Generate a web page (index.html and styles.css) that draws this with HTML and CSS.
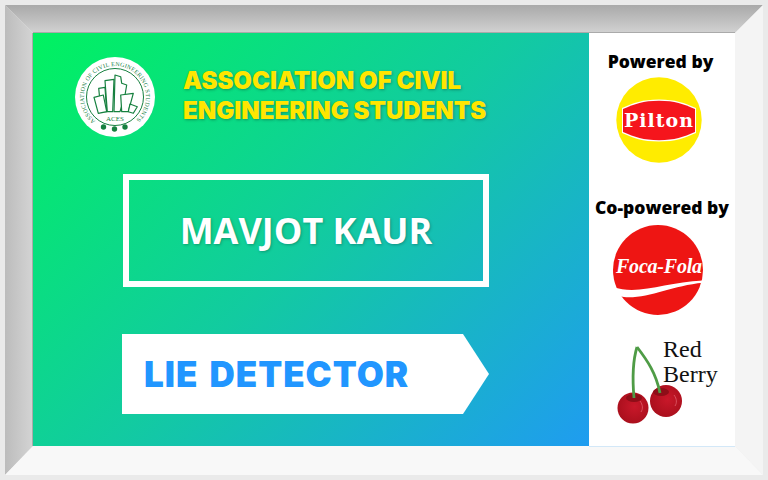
FILE: index.html
```html
<!DOCTYPE html>
<html lang="en">
<head>
  <meta charset="UTF-8" />
  <title>Lie Detector</title>
  <link rel="stylesheet" href="styles.css">
</head>
<body>

<div class="frame">
  <!-- bevelled picture frame, sits behind the board -->
  <svg class="bevel" width="768" height="480" viewBox="0 0 768 480">
    <defs>
      <linearGradient id="bevelTop" x1="0" y1="0" x2="0" y2="1">
        <stop offset="0" stop-color="#a9a9a9"/><stop offset="1" stop-color="#d2d2d2"/>
      </linearGradient>
      <linearGradient id="bevelLeft" x1="0" y1="0" x2="1" y2="0">
        <stop offset="0" stop-color="#bcbcbc"/><stop offset="1" stop-color="#d4d4d4"/>
      </linearGradient>
    </defs>
    <polygon points="5,5 763,5 735,33 33,33" fill="url(#bevelTop)"/>
    <polygon points="5,5 33,33 33,446 5,475" fill="url(#bevelLeft)"/>
    <polygon points="763,5 763,475 735,446 735,33" fill="#f4f4f4"/>
    <polygon points="5,475 33,446 735,446 763,475" fill="#f8f8f8"/>
  </svg>

  <div class="board">
    <div class="stage">
      <div class="club">
        <svg class="club-logo" width="80" height="80" viewBox="0 0 80 80">
          <defs>
            <path id="ringText" d="M 20.6 64.2 A 31 31 0 1 1 59.4 64.2"/>
          </defs>
          <circle cx="40" cy="40" r="40" fill="#fff"/>
          <circle cx="40" cy="40" r="28.5" fill="none" stroke="#16803f" stroke-width="1"/>
          <text class="ring-text" textLength="150"><textPath href="#ringText" textLength="150">ASSOCIATION OF CIVIL ENGINEERING STUDENTS</textPath></text>
          <g fill="#fff" stroke="#16803f" stroke-width="1.2" stroke-linejoin="round">
            <polygon points="23.7,31.3 30,30.3 31.7,54.7 26,55"/>
            <polygon points="19,40.3 28.3,38 31.7,54.7 23.3,56.3"/>
            <polygon points="30,23.7 39,22.3 37.7,54.7 32.3,54.7"/>
            <polygon points="40,18 45.7,19.7 46.7,26.3 51.7,28 50,38 45,54.7 39,54.7"/>
            <polygon points="45.7,38 58.3,36.3 53.3,54.7 46.7,54.7"/>
            <polygon points="55,47 62.3,49.7 58.3,56.3 53.3,54.7"/>
          </g>
          <text class="aces" x="40" y="64" text-anchor="middle">ACES</text>
          <circle cx="28.5" cy="70" r="2.7" fill="#16803f"/>
          <circle cx="39.5" cy="72" r="2.7" fill="#16803f"/>
          <circle cx="50" cy="70" r="2.7" fill="#16803f"/>
        </svg>
        <h1 class="club-name">ASSOCIATION OF CIVIL<br>ENGINEERING STUDENTS</h1>
      </div>

      <div class="name-box">MAVJOT KAUR</div>

      <div class="event-tag">LIE DETECTOR</div>
    </div>

    <aside class="sponsors">
      <div class="sponsor-label first">Powered by</div>
      <svg class="pilton" width="86" height="86" viewBox="0 0 86 86">
        <circle cx="43" cy="43" r="42.7" fill="#ffec00"/>
        <path d="M6 31 C 18 26 26 22.5 43 22.5 C 60 22.5 68 26 80 31 V 56 C 68 61 60 64.5 43 64.5 C 26 64.5 18 61 6 56 Z" fill="#fff"/>
        <path d="M7 32 C 19 27 27 23.8 43 23.8 C 59 23.8 67 27 79 32 V 55 C 67 60 59 63.2 43 63.2 C 27 63.2 19 60 7 55 Z" fill="#f5151c"/>
        <text class="pilton-text" x="43" y="50" text-anchor="middle">Pilton</text>
      </svg>

      <div class="sponsor-label second">Co-powered by</div>
      <svg class="foca" width="90" height="90" viewBox="0 0 90 90">
        <circle cx="45" cy="45" r="45" fill="#ee1513"/>
        <path d="M0 62 C 26 71 54 56.5 92 55.5 L 92 57.5 C 60 60 35 74 11 72 L 0 70 Z" fill="#fff"/>
        <text class="foca-text" x="46" y="48" text-anchor="middle" textLength="86">Foca-Fola</text>
      </svg>

      <svg class="berry" width="120" height="90" viewBox="0 -6 120 90">
        <defs>
          <radialGradient id="cherry" cx="0.55" cy="0.45" r="0.6">
            <stop offset="0" stop-color="#c9182a"/><stop offset="1" stop-color="#a80f1c"/>
          </radialGradient>
        </defs>
        <circle cx="26" cy="68" r="15.5" fill="url(#cherry)"/>
        <circle cx="59" cy="61" r="16" fill="url(#cherry)"/>
        <ellipse cx="27" cy="58" rx="8" ry="4" fill="#8e0e18"/>
        <ellipse cx="54" cy="52" rx="8" ry="4" fill="#8e0e18"/>
        <path d="M67 55 C 70 59 70 63 68 66" fill="none" stroke="#e0606c" stroke-width="0.8"/>
        <path d="M33 61 C 36 65 36 69 34 72" fill="none" stroke="#e0606c" stroke-width="0.8"/>
        <path d="M27 58 C 25 35 26 20 30 7" fill="none" stroke="#4f9c46" stroke-width="2.8"/>
        <path d="M30 7 C 40 20 49 33 53 53" fill="none" stroke="#4f9c46" stroke-width="2.8"/>
        <text class="berry-text" x="56" y="17">Red</text>
        <text class="berry-text" x="56" y="42">Berry</text>
      </svg>
    </aside>
  </div>
</div>

</body>
</html>
```

FILE: styles.css
```css
body {
  margin: 0;
  width: 768px;
  height: 480px;
  overflow: hidden;
  background: #eaeaea;
  font-family: "Open Sans", sans-serif;
}

.frame {
  position: relative;
  width: 768px;
  height: 480px;
  box-sizing: border-box;
  padding: 33px 33px 34px 33px;
}

.bevel {
  position: absolute;
  left: 0;
  top: 0;
}

.board {
  position: relative;
  display: flex;
  height: 413px;
  box-shadow: 0 -1px 0 #aaa, -1px 0 0 #aaa;
}

.stage {
  width: 556px;
  box-sizing: border-box;
  padding: 24px 0 0 42px;
  background: linear-gradient(135deg, #00f260 0%, #12cba0 50%, #1f9cf0 100%);
}

.club {
  display: flex;
  align-items: flex-start;
  gap: 28px;
}

.club-logo {
  flex: none;
}

.ring-text {
  font-family: "Liberation Serif", serif;
  font-size: 6px;
  fill: #16803f;
}

.aces {
  font-family: "Liberation Serif", serif;
  font-size: 7px;
  fill: #16803f;
}

.club-name {
  margin: 9px 0 0;
  font-family: Inter, sans-serif;
  font-size: 24px;
  font-weight: 900;
  line-height: 30px;
  color: #ffe600;
  text-shadow: 1px 1px 3px rgba(0, 0, 0, 0.3);
  white-space: nowrap;
}

.name-box {
  width: 366px;
  height: 113px;
  box-sizing: border-box;
  margin: 37px 0 0 48px;
  border: 6px solid #fff;
  display: flex;
  align-items: center;
  justify-content: center;
  font-size: 36px;
  font-weight: 700;
  color: #fff;
  text-shadow: 1px 1px 3px rgba(0, 0, 0, 0.25);
}

.event-tag {
  width: 367px;
  height: 80px;
  box-sizing: border-box;
  margin: 47px 0 0 47px;
  padding-left: 22px;
  display: flex;
  align-items: center;
  background: #fff;
  clip-path: polygon(0 0, 341px 0, 100% 50%, 341px 100%, 0 100%);
  font-family: Inter, sans-serif;
  font-size: 35px;
  font-weight: 900;
  letter-spacing: 1px;
  word-spacing: 3px;
  color: #2196ff;
}

.sponsors {
  width: 146px;
  display: flex;
  flex-direction: column;
  align-items: center;
  background: #fff;
  box-shadow: 0 1px 0 #d3e8f8;
}

.sponsor-label {
  font-size: 17.5px;
  font-weight: 800;
  line-height: 22px;
  color: #000;
  white-space: nowrap;
}

.sponsor-label.first {
  margin: 17px 3px 0 0;
}

.sponsor-label.second {
  margin-top: 33px;
}

.pilton {
  margin: 5px 6px 0 0;
}

.pilton-text {
  font-family: "DejaVu Serif", serif;
  font-size: 19px;
  font-weight: 700;
  letter-spacing: 1px;
  fill: #fff;
}

.foca {
  margin: 7px 8px 0 0;
}

.foca-text {
  font-family: "Liberation Serif", serif;
  font-size: 20px;
  font-style: italic;
  font-weight: 700;
  fill: #fff;
}

.berry {
  margin: 19px 0 0 10px;
}

.berry-text {
  font-family: "Liberation Serif", serif;
  font-size: 24px;
  fill: #111;
}
```
